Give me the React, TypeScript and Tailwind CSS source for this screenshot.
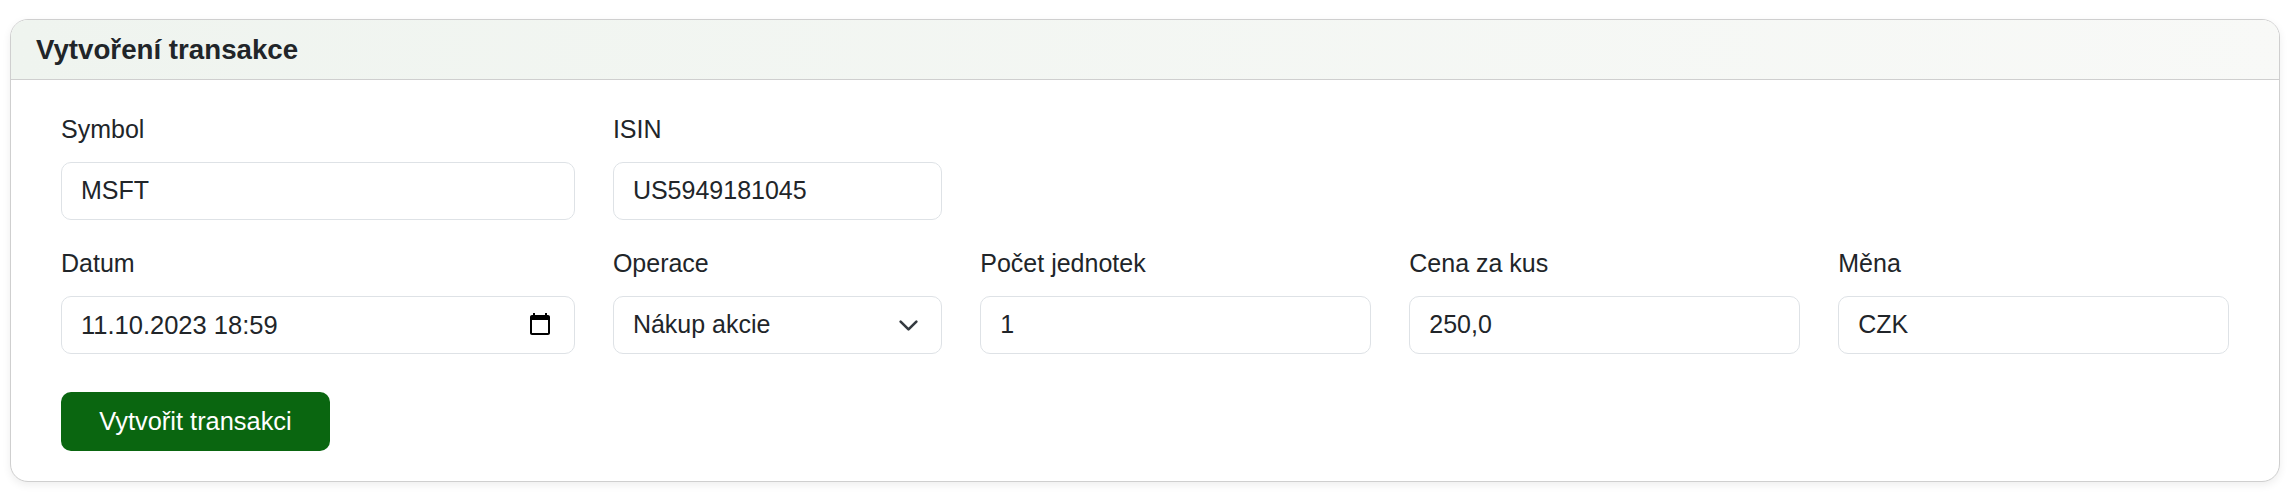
const inputBox =
  'flex h-[58px] items-center rounded-[10px] border border-[#dee2e6] bg-white px-[19px] text-[25px] text-[#212529]'
const labelText = 'mb-[15px] h-[36px] text-[25px] leading-[36px] text-[#212529]'

function Field({ label, value, className }: { label: string; value: string; className?: string }) {
  return (
    <div className={className}>
      <div className={labelText}>{label}</div>
      <div className={inputBox}>{value}</div>
    </div>
  )
}

function CalendarIcon() {
  return (
    <svg viewBox="0 0 24 24" className="-mt-[3px] h-[24px] w-[24px]" fill="#000">
      <path d="M20 3h-1V1h-2v2H7V1H5v2H4c-1.1 0-2 .9-2 2v16c0 1.1.9 2 2 2h16c1.1 0 2-.9 2-2V5c0-1.1-.9-2-2-2zm0 18H4V8h16v13z" />
    </svg>
  )
}

function ChevronIcon() {
  return (
    <svg viewBox="0 0 16 16" className="h-[21px] w-[21px]" fill="none" stroke="#343a40" strokeWidth="2" strokeLinecap="round" strokeLinejoin="round">
      <path d="m2 5 6 6 6-6" />
    </svg>
  )
}

export default function App() {
  return (
    <div className="min-h-[502px] bg-white px-[10px] pt-[19px] font-['Liberation_Sans',Arial,sans-serif]">
      <div className="w-[2270px] overflow-hidden rounded-[18px] border border-[#cfcfcf] bg-white shadow-[0_3px_8px_rgba(0,0,0,0.07)]">
        <div className="flex h-[60px] items-center border-b border-[#cfcfcf] bg-gradient-to-r from-[#eff4ef] to-[#f8f9f7] px-[25px]">
          <h5 className="text-[27.7px] font-bold text-[#212529]">Vytvoření transakce</h5>
        </div>

        <div className="px-[50px] pb-[30px] pt-[31px]">
          <div className="grid grid-cols-[513.5px_329px_390.6px_390.6px_390.6px] gap-x-[38.4px] gap-y-[25px]">
            <Field label="Symbol" value="MSFT" />
            <Field label="ISIN" value="US5949181045" className="col-span-4 w-[329px]" />

            <div>
              <div className={labelText}>Datum</div>
              <div className={`${inputBox} justify-between pr-[22px]`}>
                <span className="text-[25.5px]">11.10.2023 18:59</span>
                <CalendarIcon />
              </div>
            </div>
            <div>
              <div className={labelText}>Operace</div>
              <div className={`${inputBox} justify-between pr-[22px]`}>
                <span>Nákup akcie</span>
                <ChevronIcon />
              </div>
            </div>
            <Field label="Počet jednotek" value="1" />
            <Field label="Cena za kus" value="250,0" />
            <Field label="Měna" value="CZK" />
          </div>

          <button className="mt-[38px] block h-[59px] w-[269px] rounded-[10px] bg-[#0a6610] text-[25.4px] text-white">
            Vytvořit transakci
          </button>
        </div>
      </div>
    </div>
  )
}
